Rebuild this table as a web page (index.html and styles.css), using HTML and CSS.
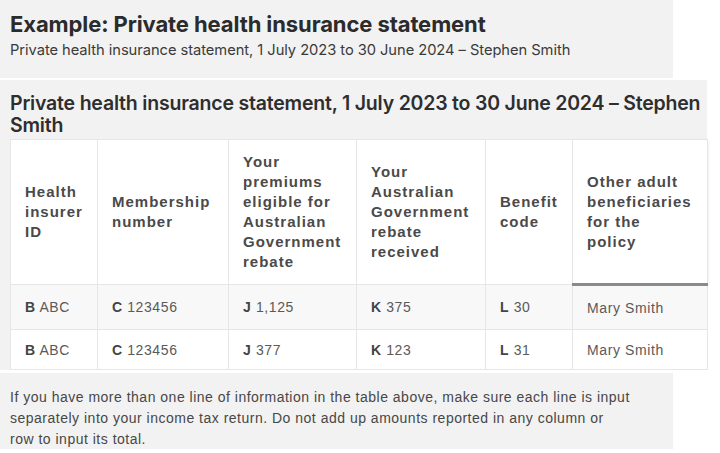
FILE: index.html
```html
<!DOCTYPE html>
<html lang="en">
<head>
<meta charset="utf-8">
<title>Private health insurance statement</title>
<link rel="stylesheet" href="styles.css">
</head>
<body>
<section class="block block-top">
  <h1 class="title">Example: Private health insurance statement</h1>
  <p class="subtitle">Private health insurance statement, 1 July 2023 to 30 June 2024 – Stephen Smith</p>
</section>
<section class="block block-table">
  <h2 class="caption">Private health insurance statement, 1 July 2023 to 30 June 2024 – Stephen Smith</h2>
  <table class="phi">
    <colgroup>
      <col class="c1"><col class="c2"><col class="c3"><col class="c4"><col class="c5"><col class="c6">
    </colgroup>
    <thead>
      <tr>
        <th>Health insurer ID</th>
        <th>Membership number</th>
        <th>Your premiums eligible for Australian Government rebate</th>
        <th>Your Australian Government rebate received</th>
        <th>Benefit code</th>
        <th class="active">Other adult beneficiaries for the policy</th>
      </tr>
    </thead>
    <tbody>
      <tr class="odd">
        <td><b>B</b> ABC</td>
        <td><b>C</b> 123456</td>
        <td><b>J</b> 1,125</td>
        <td><b>K</b> 375</td>
        <td><b>L</b> 30</td>
        <td>Mary Smith</td>
      </tr>
      <tr class="even">
        <td><b>B</b> ABC</td>
        <td><b>C</b> 123456</td>
        <td><b>J</b> 377</td>
        <td><b>K</b> 123</td>
        <td><b>L</b> 31</td>
        <td>Mary Smith</td>
      </tr>
    </tbody>
  </table>
</section>
<section class="block block-note">
  <p class="note">If you have more than one line of information in the table above, make sure each line is input<br>separately into your income tax return. Do not add up amounts reported in any column or<br>row to input its total.</p>
</section>
</body>
</html>
```
FILE: styles.css
```css
html, body {
  margin: 0;
  padding: 0;
  background: #ffffff;
}
body {
  width: 720px;
  height: 453px;
  overflow: hidden;
  color: #333;
  font-family: "Liberation Sans", Arial, sans-serif;
}
.block {
  background: #f2f2f2;
}
.block-top {
  width: 673px;
  height: 78px;
  padding: 11px 0 0 10px;
  box-sizing: border-box;
}
.title {
  margin: 0;
  font-family: Inter, "Noto Sans", sans-serif;
  font-weight: 700;
  font-size: 22px;
  line-height: 27px;
  letter-spacing: -0.1px;
  color: #2b2b2b;
}
.subtitle {
  margin: 3px 0 0;
  font-family: Inter, "Noto Sans", sans-serif;
  font-size: 14.7px;
  line-height: 18px;
  letter-spacing: -0.05px;
  color: #3a3a3a;
}
.block-table {
  width: 707px;
  margin-top: 2px;
  padding: 12px 0 0 0;
  box-sizing: border-box;
}
.caption {
  margin: 0;
  padding: 0 0 3px 10px;
  font-family: Inter, "Noto Sans", sans-serif;
  font-weight: 600;
  font-size: 19.5px;
  line-height: 22px;
  letter-spacing: -0.2px;
  color: #2e2e2e;
}
.phi {
  margin-left: 10px;
  width: 697px;
  border-collapse: collapse;
  table-layout: fixed;
  background: #fff;
}
.c1 { width: 87px; }
.c2 { width: 131px; }
.c3 { width: 128px; }
.c4 { width: 129px; }
.c5 { width: 87px; }
.c6 { width: 135px; }
.phi th,
.phi td {
  border: 1px solid #e6e6e6;
  padding: 0 6px 0 14px;
  text-align: left;
  vertical-align: middle;
}
.phi th {
  height: 143px;
  font-weight: 700;
  font-size: 15px;
  line-height: 20px;
  letter-spacing: 1px;
  color: #4a4a4a;
}
.phi th.active {
  padding-right: 16px;
  border-bottom: 3px solid #8a8a8a;
  box-shadow: 1px 0 3px rgba(0,0,0,0.06);
}
.phi td {
  font-size: 14px;
  letter-spacing: 0.6px;
  color: #5a5a5a;
}
.phi tr.odd td {
  height: 43px;
  background: #f8f8f8;
}
.phi tr.even td {
  height: 39px;
}
.phi td b {
  color: #444;
}
.block-note {
  width: 673px;
  height: 76px;
  margin-top: 3px;
  padding: 14px 10px 0 10px;
  box-sizing: border-box;
}
.note {
  margin: 0;
  font-size: 14px;
  line-height: 21px;
  letter-spacing: 0.5px;
  white-space: nowrap;
  color: #474747;
}
```
